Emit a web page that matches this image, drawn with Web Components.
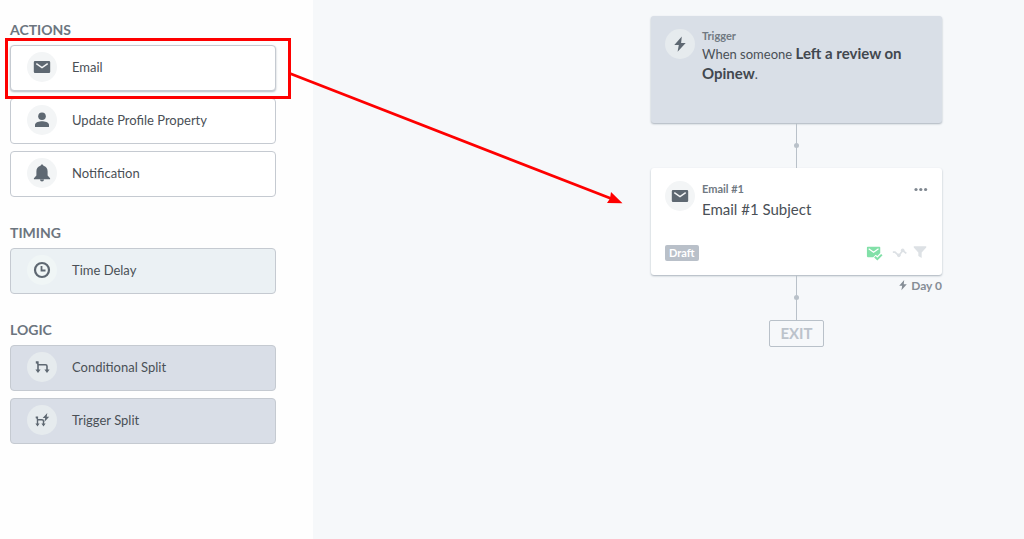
<!DOCTYPE html>
<html lang="en">
<head>
<meta charset="utf-8">
<title>Flow builder</title>
<style>
  html, body { margin: 0; height: 100%; }
  body { font-family: Lato, "Open Sans", sans-serif; color: #4a5056; background: #f6f8fa; }
</style>
</head>
<body>
<flow-builder></flow-builder>

<script>
const ICONS = {
  mail: '<path fill="currentColor" d="M5 6h14a1.200 1.200 0 0 1 1.200 1.200v9.600a1.200 1.200 0 0 1-1.200 1.200H5a1.200 1.200 0 0 1-1.200-1.200V7.200A1.200 1.200 0 0 1 5 6z"/><path d="M6.300 8.700 12 12.600l5.700-3.900" fill="none" stroke="#f3f5f6" stroke-width="1.500"/>',
  person: '<circle cx="12" cy="8.200" r="3.800" fill="currentColor"/><path fill="currentColor" d="M5 19v-2.200c0-2.600 4.500-3.600 7-3.600s7 1 7 3.600V19z"/>',
  bell: '<path fill="currentColor" d="M12 3.400c.9 0 1.400.6 1.400 1.400 2.700.7 4.200 2.800 4.200 5.400v4.300l2.500 2.700v1H3.900v-1l2.500-2.700v-4.300c0-2.600 1.500-4.700 4.200-5.400 0-.8.5-1.400 1.400-1.400zM10 18.600h4a2 2 0 0 1-4 0z"/>',
  clock: '<circle cx="12" cy="12" r="7" fill="none" stroke="currentColor" stroke-width="2.200"/><path d="M11.500 8v4.500h4" fill="none" stroke="currentColor" stroke-width="1.800"/>',
  split: '<path d="M7.200 7.200 8 9.500v6M8 9.800h7.500q1.500 0 1.500 1.500v4.200" fill="none" stroke="currentColor" stroke-width="1.600"/><path fill="currentColor" d="M5.800 6.200h2.800v2.200H5.800zM5.400 14.600h5.200L8 18zM14.400 14.600h5.200L17 18z"/>',
  triggerSplit: '<path d="M6.900 9.500l.6 1.800v5M7.500 11.700h4.500q1.500 0 1.500 1.500v3.300" fill="none" stroke="currentColor" stroke-width="1.400"/><path fill="currentColor" d="M5.700 8.500h2.400v1.800H5.700zM5.400 15.600h4.200l-2.100 2.800zM11.400 15.600h4.200l-2.100 2.800zM17.300 5l-4.600 5h2.500l-.9 4L19.200 8.700h-2.500z"/>',
  bolt: '<path fill="currentColor" d="M13.800 4.500 6.300 13h4.500l-1.200 6.700L17.700 10.900h-4.600z"/>',
  mailCheck: '<path fill="currentColor" d="M4.500 4.500h14a1 1 0 0 1 1 1V12l-3.500 3.500-2-1.500-3 3H4.500a1 1 0 0 1-1-1V5.500a1 1 0 0 1 1-1z"/><path d="M5.600 7l5.900 4 5.900-4" fill="none" stroke="#fff" stroke-width="1.500"/><path d="M13 16.500l3 2.800 5.400-5.400" fill="none" stroke="currentColor" stroke-width="2.400"/>',
  trend: '<path d="M7 11h2.600l4.600 4.200 4.600-6.200 4.400 3.500" fill="none" stroke="currentColor" stroke-width="2"/><circle cx="14.200" cy="14.800" r="2.200" fill="currentColor"/><circle cx="18.800" cy="8.800" r="2.200" fill="currentColor"/>',
  funnel: '<path fill="currentColor" d="M4.500 4h15v1.500L14 11.500V18l-4-2.500v-4L4.500 5.500z"/>'
};

class FlowIcon extends HTMLElement {
  connectedCallback() {
    this.attachShadow({ mode: 'open' }).innerHTML = `
      <style>
        :host { display: block; width: 24px; height: 24px; flex: none; }
        svg { display: block; width: 100%; height: 100%; }
      </style>
      <svg viewBox="0 0 24 24" aria-hidden="true">${ICONS[this.getAttribute('name')]}</svg>`;
  }
}
customElements.define('flow-icon', FlowIcon);

class IconDisc extends HTMLElement {
  connectedCallback() {
    this.attachShadow({ mode: 'open' }).innerHTML = `
      <style>
        :host { display: grid; place-items: center; width: 30px; height: 30px; flex: none;
                border-radius: 50%; background: var(--disc, #f3f5f6); color: #5e6872; }
      </style>
      <flow-icon name="${this.getAttribute('name')}"></flow-icon>`;
  }
}
customElements.define('icon-disc', IconDisc);

class PaletteItem extends HTMLElement {
  connectedCallback() {
    this.attachShadow({ mode: 'open' }).innerHTML = `
      <style>
        :host { display: block; --tile: #fff; }
        :host([tone="timing"]) { --tile: #ebf1f4; --disc: #f0f6f6; }
        :host([tone="logic"]) { --tile: #d9dee7; --disc: #e6ebee; }
        :host([active]) button { box-shadow: 0 1px 2px #b4bbc3; }
        button { display: flex; align-items: center; gap: 15px; box-sizing: border-box;
                 width: 100%; height: 46px; margin: 0; padding: 0 16px 2px; text-align: left;
                 border: 1px solid #c5cad1; border-radius: 4px; background: var(--tile);
                 font: inherit; font-size: 13px; line-height: 20px; color: #4a5056; cursor: grab; }
      </style>
      <button type="button"><icon-disc name="${this.getAttribute('icon')}"></icon-disc><slot></slot></button>`;
  }
}
customElements.define('palette-item', PaletteItem);

class PaletteSection extends HTMLElement {
  connectedCallback() {
    this.attachShadow({ mode: 'open' }).innerHTML = `
      <style>
        :host { display: block; }
        h2 { margin: 0 0 5px; font-size: 14px; line-height: 20px; font-weight: 700; color: #6c757f; }
        div { display: grid; gap: 7px; }
      </style>
      <h2>${this.getAttribute('heading')}</h2>
      <div><slot></slot></div>`;
  }
}
customElements.define('palette-section', PaletteSection);

class FlowPalette extends HTMLElement {
  connectedCallback() {
    this.attachShadow({ mode: 'open' }).innerHTML = `
      <style>
        :host { display: flex; flex-direction: column; gap: 26px; box-sizing: border-box;
                padding: 20px 37px 20px 10px; background: #fefefe; }
      </style>
      <palette-section heading="ACTIONS">
        <palette-item icon="mail" active>Email</palette-item>
        <palette-item icon="person">Update Profile Property</palette-item>
        <palette-item icon="bell">Notification</palette-item>
      </palette-section>
      <palette-section heading="TIMING">
        <palette-item icon="clock" tone="timing">Time Delay</palette-item>
      </palette-section>
      <palette-section heading="LOGIC">
        <palette-item icon="split" tone="logic">Conditional Split</palette-item>
        <palette-item icon="triggerSplit" tone="logic">Trigger Split</palette-item>
      </palette-section>`;
  }
}
customElements.define('flow-palette', FlowPalette);

class FlowCard extends HTMLElement {
  connectedCallback() {
    this.attachShadow({ mode: 'open' }).innerHTML = `
      <style>
        :host { display: flex; flex-direction: column; justify-content: space-between;
                box-sizing: border-box; width: 100%; min-height: 107px; padding: 13px 14px 14px;
                border-radius: 3px; background: #fff; box-shadow: 0 1px 2px #a9b2bb; }
        :host([tone="trigger"]) { background: #d9dfe7; --disc: #e6ebee; }
        header { display: flex; gap: 7px; }
        .text { flex: 1; }
        .kind { font-size: 11px; line-height: 16px; font-weight: 700; color: #707982; }
        .title { font-size: 15px; line-height: 24px; }
        :host([tone="trigger"]) .kind { line-height: 14px; }
        :host([tone="trigger"]) .title { margin-top: 1px; font-size: 13px; line-height: 19px; }
      </style>
      <header>
        <icon-disc name="${this.getAttribute('icon')}"></icon-disc>
        <div class="text">
          <div class="kind">${this.getAttribute('kind')}</div>
          <div class="title"><slot></slot></div>
        </div>
        <slot name="menu"></slot>
      </header>
      <slot name="footer"></slot>`;
  }
}
customElements.define('flow-card', FlowCard);

class CardMenu extends HTMLElement {
  connectedCallback() {
    this.attachShadow({ mode: 'open' }).innerHTML = `
      <style>
        :host { display: block; }
        button { display: block; margin: 0; padding: 0; border: 0; background: none; color: #7f8790; }
        svg { display: block; width: 14px; height: 16px; }
      </style>
      <button type="button" aria-label="More options">
        <svg viewBox="0 0 14 16" fill="currentColor"><circle cx="2" cy="8.500" r="1.600"/><circle cx="6.800" cy="8.500" r="1.600"/><circle cx="11.600" cy="8.500" r="1.600"/></svg>
      </button>`;
  }
}
customElements.define('card-menu', CardMenu);

class CardStatus extends HTMLElement {
  connectedCallback() {
    this.attachShadow({ mode: 'open' }).innerHTML = `
      <style>
        :host { display: flex; justify-content: space-between; align-items: center; }
        .badge { padding: 0 4px; border-radius: 2px; background: #b9c0c9; color: #fff;
                 font-size: 11px; line-height: 16px; font-weight: 700; }
        .icons { display: flex; gap: 3px; margin: -2px; color: #dde1e5; }
        flow-icon { width: 20px; height: 20px; }
        flow-icon:first-child { color: #82e0a8; }
      </style>
      <span class="badge"><slot></slot></span>
      <div class="icons">
        <flow-icon name="mailCheck"></flow-icon>
        <flow-icon name="trend"></flow-icon>
        <flow-icon name="funnel"></flow-icon>
      </div>`;
  }
}
customElements.define('card-status', CardStatus);

class FlowConnector extends HTMLElement {
  connectedCallback() {
    this.attachShadow({ mode: 'open' }).innerHTML = `
      <style>
        :host { display: grid; grid-template-columns: 1fr auto 1fr; height: 45px; }
        .line { grid-column: 2; display: flex; justify-content: center; align-items: center;
                width: 1px; background: #b9c1c9; }
        .dot { flex: none; width: 5px; height: 5px; border-radius: 50%; background: #b9c1c9; }
        .note { display: flex; justify-content: flex-end; align-items: center; height: 20px;
                font-size: 12px; font-weight: 700; color: #858d96; }
      </style>
      <div class="line"><span class="dot"></span></div>
      <div class="note"><slot></slot></div>`;
  }
}
customElements.define('flow-connector', FlowConnector);

class FlowExit extends HTMLElement {
  connectedCallback() {
    this.attachShadow({ mode: 'open' }).innerHTML = `
      <style>
        :host { display: block; padding: 0 10px; border: 1px solid #b9c1c9; border-radius: 2px;
                font-size: 15px; line-height: 25px; font-weight: 700; color: #bcc3cb; }
      </style>
      <slot></slot>`;
  }
}
customElements.define('flow-exit', FlowExit);

class FlowCanvas extends HTMLElement {
  connectedCallback() {
    this.attachShadow({ mode: 'open' }).innerHTML = `
      <style>
        :host { display: flex; justify-content: flex-end; box-sizing: border-box;
                padding: 16px 82px 20px 20px; background: #f6f8fa; }
        .path { display: flex; flex-direction: column; align-items: center; width: 291px; }
        flow-connector { width: 100%; }
        b { font-size: 15px; color: #42484f; }
        .day { display: flex; align-items: center; }
        .day flow-icon { width: 16px; height: 16px; }
      </style>
      <div class="path">
        <flow-card tone="trigger" icon="bolt" kind="Trigger">When someone <b>Left a review on</b> <b>Opinew</b>.</flow-card>
        <flow-connector></flow-connector>
        <flow-card icon="mail" kind="Email #1">Email #1 Subject
          <card-menu slot="menu"></card-menu>
          <card-status slot="footer">Draft</card-status>
        </flow-card>
        <flow-connector><span class="day"><flow-icon name="bolt"></flow-icon>Day 0</span></flow-connector>
        <flow-exit>EXIT</flow-exit>
      </div>`;
  }
}
customElements.define('flow-canvas', FlowCanvas);

/* Callout drawn over the builder: frames the Email tile and points at the card. */
class DragCallout extends HTMLElement {
  connectedCallback() {
    this.attachShadow({ mode: 'open' }).innerHTML = `
      <style>
        :host { position: absolute; top: 38px; left: 5px; pointer-events: none; color: #fe0000; }
        svg { display: block; width: 620px; height: 170px; }
      </style>
      <svg viewBox="0 0 620 170" aria-hidden="true">
        <rect x="1.500" y="1.500" width="283" height="58" fill="none" stroke="currentColor" stroke-width="3"/>
        <path d="M285 35.500 606 160.500" fill="none" stroke="currentColor" stroke-width="2.800"/>
        <path d="M617.500 165.200 602 165 605 160.500 606 154z" fill="currentColor"/>
      </svg>`;
  }
}
customElements.define('drag-callout', DragCallout);

class FlowBuilder extends HTMLElement {
  connectedCallback() {
    this.attachShadow({ mode: 'open' }).innerHTML = `
      <style>
        :host { position: relative; display: grid; grid-template-columns: 313px 1fr; min-height: 100%; overflow: hidden; }
      </style>
      <flow-palette></flow-palette>
      <flow-canvas></flow-canvas>
      <drag-callout></drag-callout>`;
  }
}
customElements.define('flow-builder', FlowBuilder);
</script>
</body>
</html>
